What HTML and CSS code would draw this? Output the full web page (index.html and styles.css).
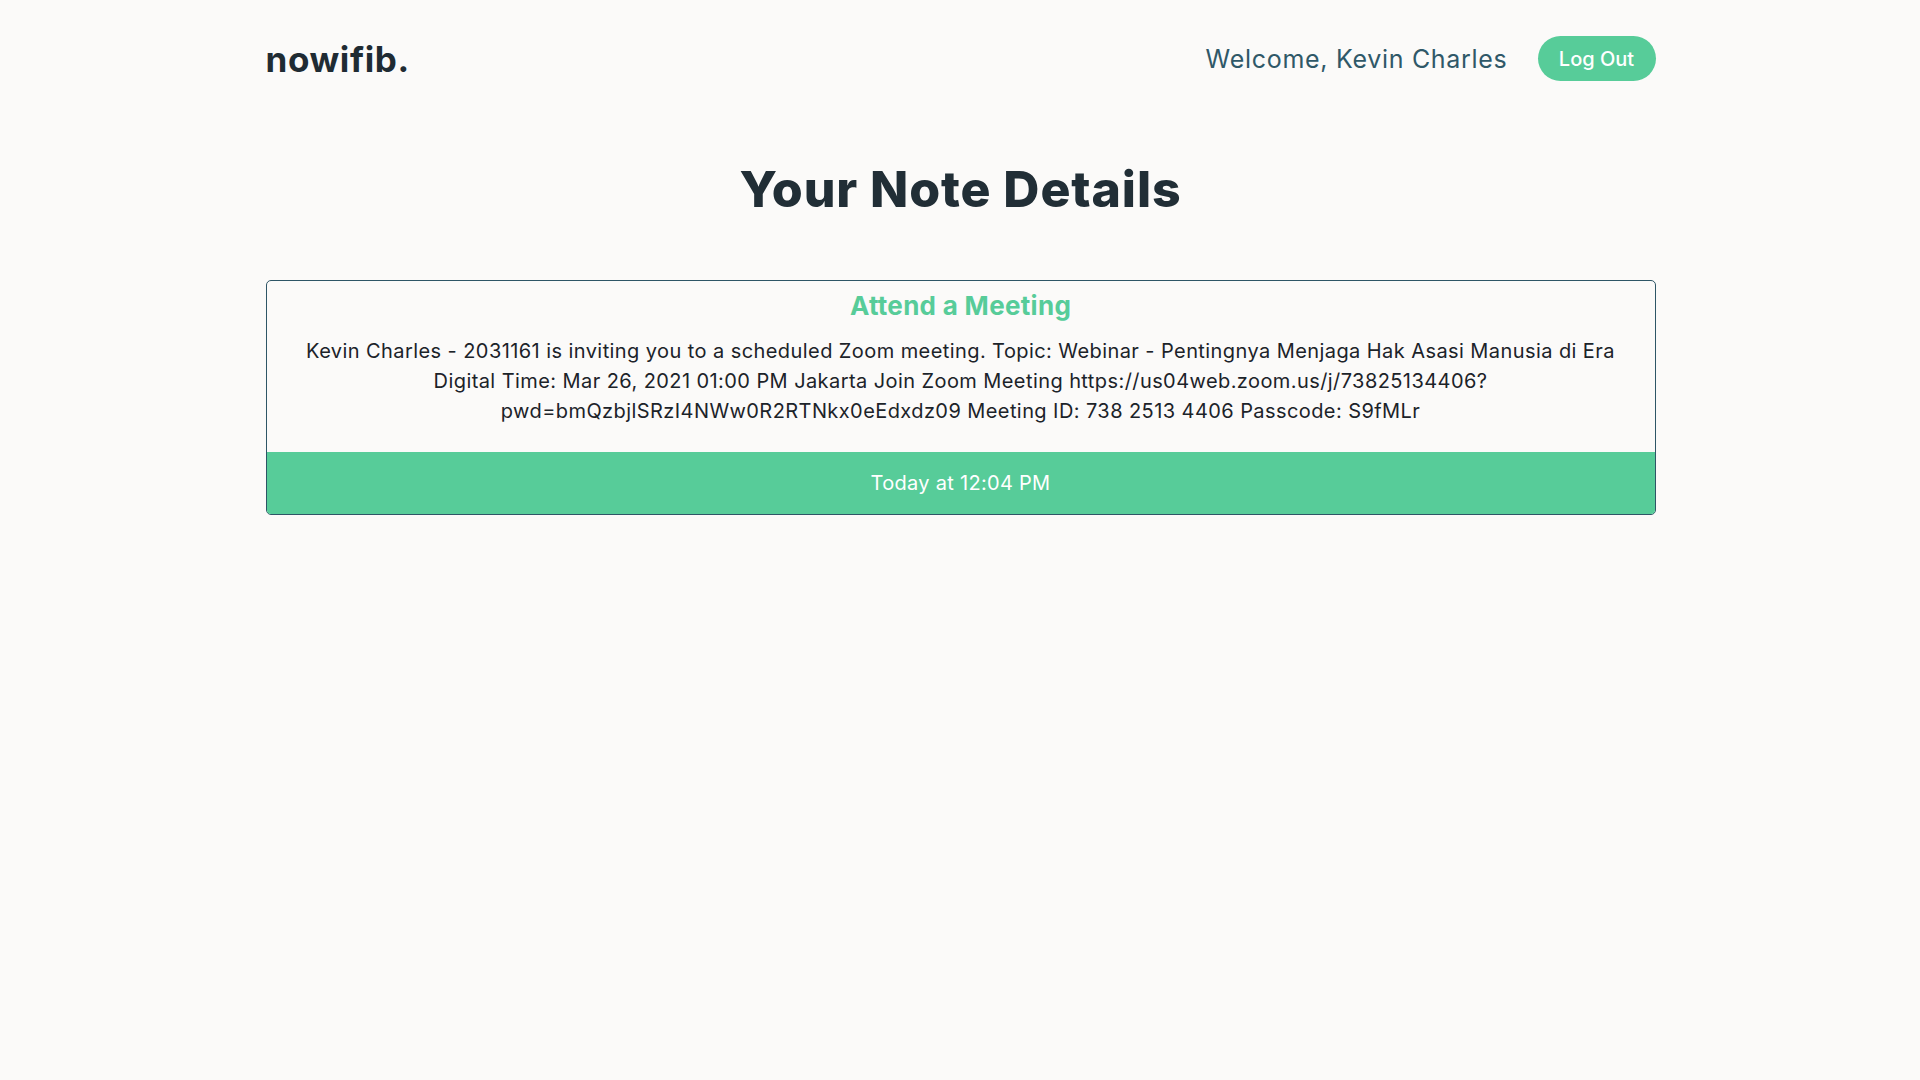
FILE: index.html
```html
<!DOCTYPE html>
<html lang="en">
<head>
<meta charset="utf-8">
<title>Your Note Details - nowifib.</title>
<link rel="stylesheet" href="styles.css">
</head>
<body>
<div class="container">
  <header class="topbar">
    <div class="logo">nowifib.</div>
    <div class="user">
      <span class="welcome">Welcome, Kevin Charles</span>
      <button class="logout">Log Out</button>
    </div>
  </header>
  <h1 class="page-title">Your Note Details</h1>
  <section class="note-card">
    <h2 class="note-title">Attend a Meeting</h2>
    <p class="note-body">Kevin Charles - 2031161 is inviting you to a scheduled Zoom meeting. Topic: Webinar - Pentingnya Menjaga Hak Asasi Manusia di Era Digital Time: Mar 26, 2021 01:00 PM Jakarta Join Zoom Meeting https://us04web.zoom.us/j/73825134406?<wbr>pwd=bmQzbjlSRzI4NWw0R2RTNkx0eEdxdz09 Meeting ID: 738 2513 4406 Passcode: S9fMLr</p>
    <div class="note-footer">Today at 12:04 PM</div>
  </section>
</div>
</body>
</html>
```
FILE: styles.css
```css
body{
  margin:0;
  background:#fbfaf9;
  font-family:Inter,"DejaVu Sans",sans-serif;
  color:#1f2b33;
}
.container{
  width:1390px;
  margin:0 auto;
  padding-left:1px;
}
.topbar{
  display:flex;
  justify-content:space-between;
  align-items:center;
  padding-top:36px;
}
.logo{
  font-size:35px;
  font-weight:700;
  color:#1f2b33;
  letter-spacing:0.6px;
}
.user{
  display:flex;
  align-items:center;
  gap:30px;
}
.welcome{
  font-size:25px;
  color:#2f5868;
  letter-spacing:0.7px;
}
.logout{
  height:45px;
  width:118px;
  border:none;
  border-radius:23px;
  background:#57cc99;
  color:#fff;
  font-family:inherit;
  font-size:20px;
  font-weight:500;
  cursor:pointer;
}
.page-title{
  margin:71px 0 53px;
  text-align:center;
  font-size:50px;
  line-height:75px;
  font-weight:800;
  color:#212e36;
  letter-spacing:0.9px;
}
.note-card{
  border:1px solid #2e5566;
  border-radius:5px;
  overflow:hidden;
  text-align:center;
}
.note-title{
  margin:6px 0 0;
  font-size:26px;
  line-height:38px;
  font-weight:700;
  color:#57cc99;
  letter-spacing:0.3px;
}
.note-body{
  margin:11px 0 0;
  padding:0 30px 26px;
  font-size:20px;
  line-height:30px;
  letter-spacing:0.42px;
  color:#1c2329;
}
.note-footer{
  height:62px;
  display:flex;
  align-items:center;
  justify-content:center;
  background:#57cc99;
  color:#fff;
  font-size:20px;
  letter-spacing:0.3px;
}
```
